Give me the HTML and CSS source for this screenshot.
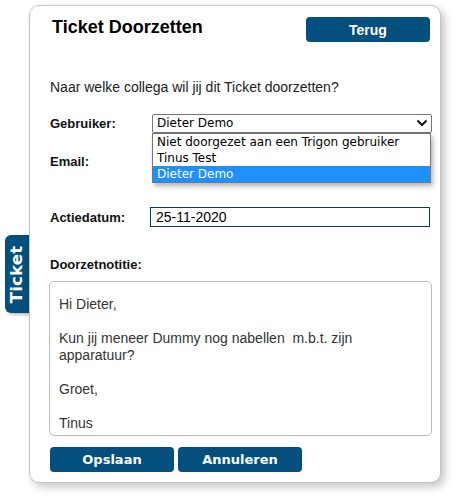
FILE: index.html
```html
<!DOCTYPE html>
<html>
<head>
<meta charset="utf-8">
<link rel="stylesheet" href="styles.css">
</head>
<body>
<div class="page">
  <div class="side-tab"><span class="side-tab-text">Ticket</span></div>
  <div class="card">
    <div class="header">
      <h1 class="title">Ticket Doorzetten</h1>
      <button class="btn btn-back">Terug</button>
    </div>
    <p class="question">Naar welke collega wil jij dit Ticket doorzetten?</p>
    <div class="row row-user">
      <label class="label">Gebruiker:</label>
      <div class="select-wrap">
        <div class="select">
          <span>Dieter Demo</span>
          <svg class="chev" width="12" height="8" viewBox="0 0 12 8"><path d="M1.5 1.5 L6 6 L10.5 1.5" fill="none" stroke="#111" stroke-width="2"/></svg>
        </div>
        <ul class="options">
          <li class="opt">Niet doorgezet aan een Trigon gebruiker</li>
          <li class="opt">Tinus Test</li>
          <li class="opt opt-sel">Dieter Demo</li>
        </ul>
      </div>
    </div>
    <div class="row row-email">
      <label class="label">Email:</label>
    </div>
    <div class="row row-date">
      <label class="label">Actiedatum:</label>
      <div class="input">25-11-2020</div>
    </div>
    <div class="label note-label">Doorzetnotitie:</div>
    <div class="textarea">
      <p class="tline">Hi Dieter,</p>
      <p class="tline">&nbsp;</p>
      <p class="tline">Kun jij meneer Dummy nog nabellen&nbsp; m.b.t. zijn</p>
      <p class="tline">apparatuur?</p>
      <p class="tline">&nbsp;</p>
      <p class="tline">Groet,</p>
      <p class="tline">&nbsp;</p>
      <p class="tline">Tinus</p>
    </div>
    <div class="actions">
      <button class="btn btn-action">Opslaan</button>
      <button class="btn btn-action">Annuleren</button>
    </div>
  </div>
</div>
</body>
</html>
```
FILE: styles.css
```css
html, body {
  margin: 0;
  padding: 0;
  background: #ffffff;
}
body {
  font-family: "Liberation Sans", Arial, sans-serif;
  color: #222;
  width: 456px;
  height: 496px;
  overflow: hidden;
}
.page {
  position: relative;
  padding: 5px 0 0 29px;
}
.side-tab {
  position: absolute;
  left: 5px;
  top: 235px;
  width: 24px;
  height: 78px;
  background: #03507e;
  border-radius: 6px 0 0 6px;
  box-shadow: 2px 2px 3px rgba(0,0,0,0.25);
  display: flex;
  align-items: center;
  justify-content: center;
}
.side-tab-text {
  transform: rotate(-90deg);
  color: #fff;
  font-family: "DejaVu Sans", Verdana, sans-serif;
  font-weight: bold;
  font-size: 16.5px;
  white-space: nowrap;
  letter-spacing: 0.2px;
}
.card {
  width: 380px;
  height: 465px;
  border: 1px solid #c4c4c4;
  border-radius: 10px;
  background: #fff;
  box-shadow: 4px 4px 8px rgba(0,0,0,0.22);
  padding: 11px 10px 0 20px;
  position: relative;
}
.header {
  display: flex;
  justify-content: space-between;
  align-items: flex-start;
}
.title {
  margin: 0 0 0 2px;
  font-size: 18px;
  font-weight: bold;
  color: #000;
  line-height: 21px;
}
.btn {
  background: #03507e;
  color: #fff;
  border: none;
  border-radius: 4px;
  height: 25px;
  padding: 0;
  cursor: pointer;
}
.btn-back {
  width: 124px;
  font-family: "Liberation Sans", Arial, sans-serif;
  font-weight: bold;
  font-size: 14px;
}
.question {
  margin: 37px 0 0 0;
  font-size: 14px;
  line-height: 16px;
  color: #222;
}
.row {
  display: flex;
  align-items: center;
  height: 20px;
}
.row-user {
  margin-top: 18px;
}
.row-email {
  margin-top: 18px;
}
.row-date {
  margin-top: 36px;
}
.label {
  width: 101px;
  font-size: 13px;
  font-weight: bold;
  color: #111;
  flex: none;
}
.select-wrap {
  position: relative;
  margin-left: 1px;
}
.select {
  height: 17px;
  border: 1px solid #767676;
  border-radius: 2px;
  display: flex;
  align-items: center;
  justify-content: space-between;
  padding: 0 0 0 4px;
  width: 274px;
  font-family: "DejaVu Sans", Verdana, sans-serif;
  font-size: 12px;
  color: #000;
}
.chev {
  margin-right: 3px;
}
.options {
  position: absolute;
  left: 0;
  top: 19px;
  margin: 0;
  padding: 0;
  list-style: none;
  width: 277px;
  border: 1px solid #767676;
  background: #fff;
  box-shadow: 2px 3px 5px rgba(0,0,0,0.3);
  z-index: 2;
  font-family: "DejaVu Sans", Verdana, sans-serif;
  font-size: 12px;
  color: #000;
}
.opt {
  height: 16px;
  line-height: 16px;
  padding-left: 4px;
  white-space: nowrap;
}
.opt-sel {
  background: #1e90ff;
  color: #fff;
}
.input {
  margin-left: -1px;
  width: 273px;
  height: 18px;
  border: 1px solid #0d3a5c;
  padding: 0 0 0 5px;
  font-size: 14px;
  line-height: 18px;
  color: #000;
}
.note-label {
  margin-top: 30px;
  line-height: 16px;
}
.textarea {
  margin-top: 8px;
  margin-left: -1px;
  width: 372px;
  height: 131px;
  border: 1px solid #bdbdbd;
  border-radius: 5px;
  padding: 14px 0 8px 9px;
  color: #333;
  font-size: 14px;
  overflow: hidden;
}
.tline {
  margin: 0;
  line-height: 17px;
  white-space: nowrap;
}
.actions {
  display: flex;
  gap: 4px;
  margin-top: 11px;
}
.btn-action {
  width: 124px;
  font-family: "DejaVu Sans", Verdana, sans-serif;
  font-weight: bold;
  font-size: 13px;
}
```
